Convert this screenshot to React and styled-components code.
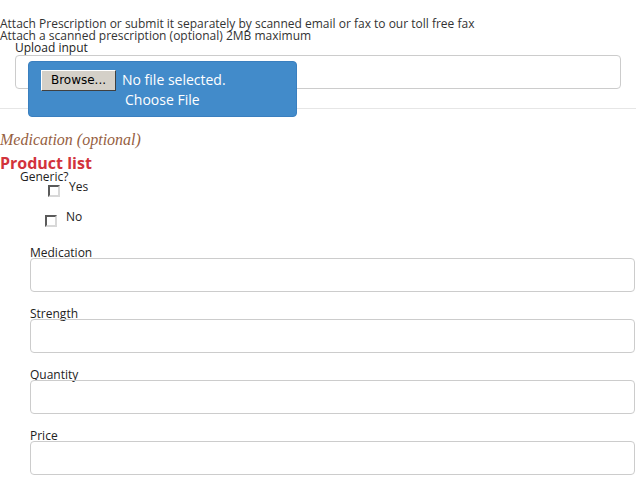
import React from 'react';
import styled, { createGlobalStyle } from 'styled-components';

const GlobalStyle = createGlobalStyle`
  html, body {
    margin: 0;
    padding: 0;
    background: #fff;
  }
  body {
    font-family: "Open Sans", "DejaVu Sans", sans-serif;
    font-size: 12px;
    color: #222;
  }
`;

const Page = styled.div`
  width: 636px;
  padding-top: 18px;
`;

const Intro = styled.div`
  line-height: 12px;
  font-size: 12px;
  color: #333;
`;

const UploadGroup = styled.div`
  margin: 0 15px 0 15px;
`;

const Label = styled.div`
  font-size: 12px;
  line-height: 12px;
  color: #222;
`;

const UploadBox = styled.div`
  position: relative;
  height: 32px;
  border: 1px solid #ccc;
  border-radius: 4px;
  margin-top: 1px;
`;

const FileOverlay = styled.div`
  position: absolute;
  left: 12px;
  top: 5px;
  width: 267px;
  height: 54px;
  background: #428bca;
  border: 1px solid #3a7fbf;
  border-radius: 4px;
  display: flex;
  flex-direction: column;
  color: #fff;
  font-size: 14px;
`;

const FileRow = styled.div`
  display: flex;
  align-items: center;
  padding: 7px 0 0 12px;
  gap: 6px;
  line-height: 22px;
`;

const BrowseButton = styled.span`
  display: inline-block;
  box-sizing: border-box;
  width: 75px;
  height: 21px;
  line-height: 19px;
  background: #d4d0c8;
  color: #000;
  font-family: "DejaVu Sans", sans-serif;
  font-size: 12px;
  text-align: center;
  border: 1px solid;
  border-color: #fff #404040 #404040 #fff;
`;

const ChooseText = styled.div`
  padding-left: 96px;
  line-height: 18px;
`;

const Divider = styled.hr`
  border: 0;
  border-top: 1px solid #e6e6e6;
  margin: 19px 0 0 0;
`;

const SectionTitle = styled.div`
  font-family: "Liberation Serif", serif;
  font-style: italic;
  font-size: 16px;
  color: #96603f;
  margin-top: 22px;
  line-height: 17px;
`;

const ListTitle = styled.div`
  font-weight: bold;
  font-size: 16px;
  color: #d2333c;
  line-height: 18px;
  margin-top: 6px;
`;

const GenericLabel = styled.div`
  margin-left: 20px;
  line-height: 12px;
  margin-top: -1px;
`;

const CheckRow = styled.label`
  display: flex;
  align-items: flex-start;
  margin-left: ${({ indent }) => indent}px;
  margin-top: ${({ top }) => top}px;
  gap: 9px;
  font-size: 12px;
  line-height: 14px;
`;

const Box = styled.span`
  display: inline-block;
  box-sizing: border-box;
  width: 12px;
  height: 12px;
  margin-top: 5px;
  background: #fff;
  border: 2px solid;
  border-color: #5a5a5a #d8d8d8 #d8d8d8 #5a5a5a;
`;

const Fields = styled.div`
  margin: 20px 1px 0 30px;
  display: flex;
  flex-direction: column;
  gap: 16px;
`;

const Field = styled.div`
  display: flex;
  flex-direction: column;
`;

const Input = styled.div`
  height: 32px;
  border: 1px solid #ccc;
  border-radius: 4px;
  margin-top: -1px;
`;

const fields = ['Medication', 'Strength', 'Quantity', 'Price'];

export default function App() {
  return (
    <>
      <GlobalStyle />
      <Page>
        <Intro>
          Attach Prescription or submit it separately by scanned email or fax to our toll free fax
          <br />
          Attach a scanned prescription (optional) 2MB maximum
        </Intro>
        <UploadGroup>
          <Label>Upload input</Label>
          <UploadBox>
            <FileOverlay>
              <FileRow>
                <BrowseButton>Browse...</BrowseButton>
                <span>No file selected.</span>
              </FileRow>
              <ChooseText>Choose File</ChooseText>
            </FileOverlay>
          </UploadBox>
        </UploadGroup>
        <Divider />
        <SectionTitle>Medication (optional)</SectionTitle>
        <ListTitle>Product list</ListTitle>
        <GenericLabel>Generic?</GenericLabel>
        <CheckRow indent={48} top={-3}>
          <Box />
          <span>Yes</span>
        </CheckRow>
        <CheckRow indent={45} top={13}>
          <Box />
          <span>No</span>
        </CheckRow>
        <Fields>
          {fields.map(name => (
            <Field key={name}>
              <Label>{name}</Label>
              <Input />
            </Field>
          ))}
        </Fields>
      </Page>
    </>
  );
}
